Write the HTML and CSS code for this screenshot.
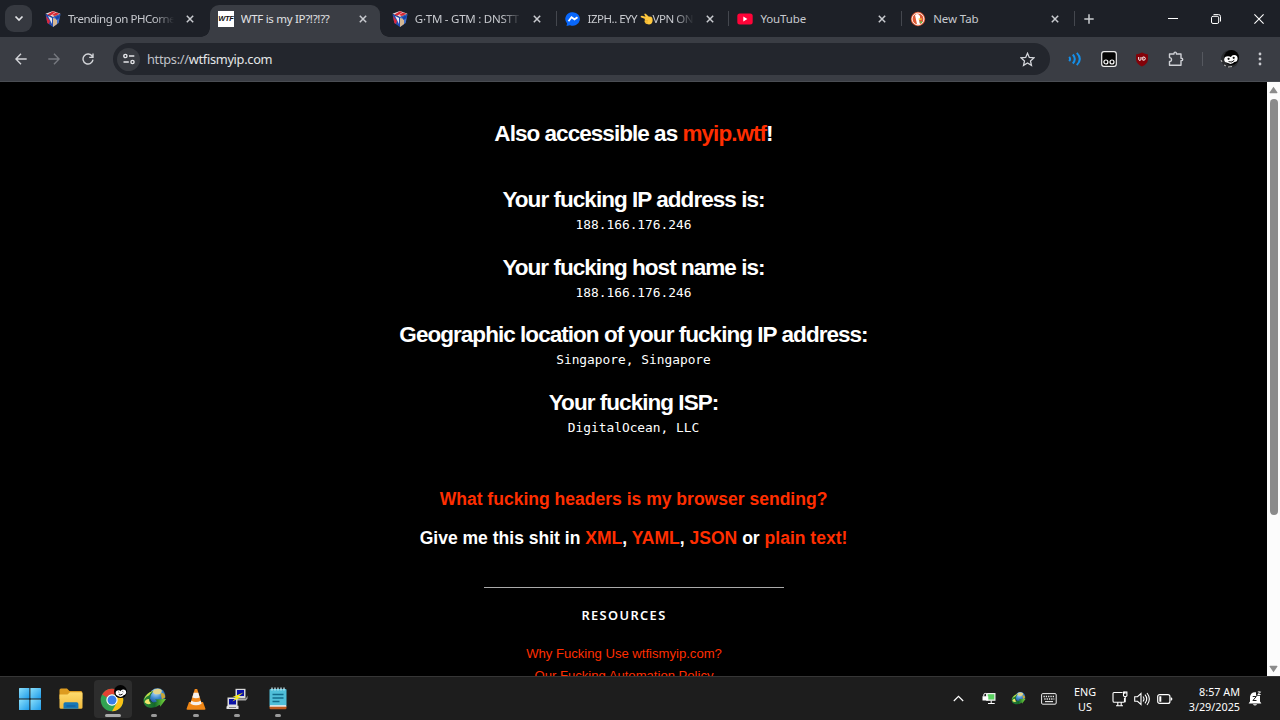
FILE: index.html
```html
<!DOCTYPE html>
<html lang="en">
<head>
<meta charset="utf-8">
<title>WTF is my IP?!?!??</title>
<link rel="stylesheet" href="styles.css">
</head>
<body>
<svg class="defs" width="0" height="0">
  <defs>
    <linearGradient id="win" x1="0" y1="0" x2="1" y2="1"><stop offset="0" stop-color="#8be0fb"/><stop offset="1" stop-color="#1d9bea"/></linearGradient>
    <linearGradient id="fold" x1="0" y1="0" x2="0" y2="1"><stop offset="0" stop-color="#ffdc6e"/><stop offset="1" stop-color="#f2b93a"/></linearGradient>
    <radialGradient id="globe" cx=".4" cy=".25" r=".8"><stop offset="0" stop-color="#c4e6ff"/><stop offset=".5" stop-color="#3f8bd0"/><stop offset="1" stop-color="#123f80"/></radialGradient>
    <linearGradient id="arrow" x1="0" y1="0" x2="1" y2="0"><stop offset="0" stop-color="#2a8a3a"/><stop offset=".5" stop-color="#14692b"/><stop offset="1" stop-color="#7fe03c"/></linearGradient>
    <symbol id="x" viewBox="0 0 8 8"><path d="M.8.8l6.4 6.4M7.2.8L.8 7.2" stroke="#c9cbd0" stroke-width="1.5"/></symbol>
    <symbol id="cube" viewBox="0 0 16 16"><path d="M8 0l7.5 2.7L8 6 .5 2.7z" fill="#e9dfe2"/><path d="M8 .2l2.5.9L5 5 2.5 3.6zM11 1.5l3.5 1.2L10 5 7 4z" fill="#d92a35"/><path d="M.5 3L8 6.2V16L2.3 12z" fill="#234bb0"/><path d="M15.5 3L8 6.2V16l5.7-4z" fill="#4272cf"/><path d="M1 5l4 5-1 3L2.3 12z" fill="#d9273a"/><path d="M3 5l4 2v6L5 9z" fill="#e8e9f3"/><path d="M8 7l4 1v5l-4 3z" fill="#d5b792"/><path d="M10 6l5-2-.5 3-3 2z" fill="#1744ab"/></symbol>
    <symbol id="idm" viewBox="0 0 22 20"><circle cx="13.800" cy="7.700" r="7.600" fill="url(#globe)"/><path d="M9 3Q14-1 18 2q0 4-4 4T9 3z" fill="#e3d58a"/><path d="M17 5q4-1 4.300 4l-3.300 2z" fill="#c6a739"/><path d="M10 2.500Q2 5 .6 10.500-.3 17.500 6.500 18.800 12 19.500 16 16l.5 2L22 10.500 11.500 11l2 1.600Q9 15 7.200 12.500 5.500 8 10 2.500z" fill="url(#arrow)"/><path d="M10 2.500Q2 5 1 11.500q1.500-3.500 5-4.500 1-2.500 4-4.500z" fill="#c3dd4b"/><path d="M1.500 13.500q3 3 6 1.300Q5.500 13 5.600 10.500 2.500 10.500 1.500 13.500z" fill="#efe56b"/></symbol>
  </defs>
</svg>
<div class="screen">
  <header class="tabstrip">
    <button class="tabsearch"><svg width="10" height="7" viewBox="0 0 10 7"><path d="M1.5 1.5L5 5l3.5-3.5" fill="none" stroke="#e2e3e6" stroke-width="1.7"/></svg></button>
    <div class="tabs">
      <div class="tab"><svg class="fav" viewBox="0 0 16 16"><use href="#cube"/></svg><span class="label fade trending">Trending on PHCorne</span><svg class="close"><use href="#x"/></svg></div>
      <div class="tab active"><span class="fav wtf">WTF</span><span class="label current-title">WTF is my IP?!?!??</span><svg class="close"><use href="#x"/></svg></div>
      <div class="tab sep"><svg class="fav" viewBox="0 0 16 16"><use href="#cube"/></svg><span class="label fade gtm">G·TM - GTM : DNSTT</span><svg class="close"><use href="#x"/></svg></div>
      <div class="tab sep"><svg class="fav" viewBox="0 0 16 16"><path d="M8 1.200a7 6.800 0 1 1-3 13L1.500 15l.6-2.500A6.800 6.800 0 0 1 8 1.200z" fill="#0867fb"/><path d="M3.500 10.200l3-3.900 3 2 3-2.100" fill="none" stroke="#fff" stroke-width="1.800"/></svg><span class="label fade izph">IZPH.. EYY <svg class="hand" viewBox="0 0 13 12"><path d="M.8 4.200Q.2 2.800 2 2.800l3.600.9L4.300 1.500Q4.600-.1 6 .9l2.600 2.500 2.700.4Q13 5 12.500 8.500q-.7 3-3.500 3l-3-.7-1-1.300q-1-1 0-1.700-1-.8.200-1.700z" fill="#ffc83d"/><path d="M5 7.700l3 .2M5.300 9.800l2.300.2" stroke="#d99720" stroke-width=".6"/></svg>VPN ON</span><svg class="close"><use href="#x"/></svg></div>
      <div class="tab sep"><svg class="fav" viewBox="0 0 16 16"><rect x=".3" y="2.500" width="15.400" height="11" rx="2.500" fill="#ff0338"/><path d="M6.300 5.600v4.800l4.100-2.400z" fill="#fff"/></svg><span class="label">YouTube</span><svg class="close"><use href="#x"/></svg></div>
      <div class="tab sep"><svg class="fav" viewBox="0 0 16 16"><circle cx="8" cy="8" r="7.200" fill="#de5833"/><circle cx="8" cy="8" r="5.900" fill="none" stroke="#fff" stroke-width=".9"/><path d="M5 4q3-2.500 5 1v3.500L9 9l1 4.300q-2 .6-3 0z" fill="#fff"/><path d="M8.700 7.300l3.300.3-.7 1.300-2.700-.2z" fill="#fdc83b"/><path d="M9 11l3-1v2.500z" fill="#65bc46"/></svg><span class="label">New Tab</span><svg class="close"><use href="#x"/></svg></div>
    </div>
    <svg class="plus" width="10" height="10" viewBox="0 0 10 10"><path d="M5 .3v9.400M.3 5h9.400" stroke="#c9cbd0" stroke-width="1.500"/></svg>
    <div class="wincontrols">
      <svg width="10" height="10" viewBox="0 0 10 10"><path d="M0 4.500h10" stroke="#fff"/></svg>
      <svg width="10" height="10" viewBox="0 0 10 10" fill="none" stroke="#fff"><rect x=".5" y="2.300" width="7.200" height="7.200" rx="1.500"/><path d="M2.500.6H7.500Q9.500.6 9.500 2.500v5"/></svg>
      <svg width="10" height="10" viewBox="0 0 10 10"><path d="M.4.4l9.200 9.200M9.600.4L.4 9.600" stroke="#fff" stroke-width="1.100"/></svg>
    </div>
  </header>

  <nav class="toolbar">
    <svg class="nav back" viewBox="0 0 12 12"><path d="M6 .8L.9 6 6 11.200M1 6h10.700"/></svg>
    <svg class="nav fwd" viewBox="0 0 12 12"><path d="M6 .8L11.100 6 6 11.200M11 6H.3"/></svg>
    <svg class="nav reload" viewBox="0 0 12 12"><path d="M10.300 3.400A5 5 0 1 0 11 6.700M11 .5v3.900H7.200"/></svg>
    <div class="omnibox">
      <span class="site"><svg width="12" height="12" viewBox="0 0 12 12" fill="none" stroke="#e5e6e9" stroke-width="1.400"><circle cx="2.400" cy="3" r="1.600"/><path d="M6 3h5.300M.5 9h5.300"/><circle cx="9.500" cy="9" r="1.600"/></svg></span>
      <span class="url"><i>https://</i>wtfismyip.com</span>
      <svg class="star" width="15" height="15" viewBox="0 0 14 14"><path d="M7 1.200l1.700 3.900 4.300.4-3.200 2.800.9 4.200L7 10.300l-3.700 2.200.9-4.200L1 5.500l4.300-.4z" fill="none" stroke="#d5d7dc" stroke-width="1.200"/></svg>
    </div>
    <div class="extensions">
      <svg width="14" height="14" viewBox="0 0 14 14" fill="none" stroke="#1590ea" stroke-width="2"><path d="M1.200 4.900q1.700 2.200 0 4.300M4.800 2.500q4 4.500 0 9M8.800.9q6 6.100 0 12.200"/></svg>
      <svg width="16" height="16" viewBox="0 0 16 16"><rect x=".7" y=".7" width="14.600" height="14.600" rx="2.300" fill="#050505" stroke="#eee" stroke-width="1.200"/><g fill="none" stroke="#fff" stroke-width="1.200"><circle cx="4.900" cy="11" r="2"/><circle cx="11" cy="11" r="2"/></g></svg>
      <svg width="14" height="15" viewBox="0 0 14 15"><path d="M7 .5q3 1.800 6 1.900v5Q12.500 12 7 14.500 1.500 12 1 7.400v-5Q4 2.300 7 .5z" fill="#830209"/><path d="M3.700 5v2.200q0 1.200 1.100 1.200T6 7.200V5M7.800 5v3.200h.8q1.700 0 1.700-1.600T8.600 5z" fill="none" stroke="#fff"/></svg>
      <svg width="16" height="16" viewBox="0 0 16 16"><path d="M1.500 3H6v-.6Q6 1.100 7.200 1.100T8.400 2.400V3H13v4.200h.4q1.300 0 1.300 1.200t-1.300 1.200H13v4.700H1.500v-3.900q2 0 2-1.900t-2-1.900z" fill="none" stroke="#cfd1d6" stroke-width="1.400" stroke-linejoin="round"/></svg>
      <span class="divider"></span>
      <svg width="20" height="20" viewBox="0 0 20 20"><circle cx="10" cy="10" r="9" fill="#292b2e"/><circle cx="11.500" cy="8.500" r="7.500" fill="#020202"/><ellipse cx="8" cy="10.500" rx="3.800" ry="3.300" fill="#fff"/><ellipse cx="14.200" cy="9.600" rx="3.400" ry="3.500" fill="#fff"/><path d="M6 12q4 5.500 9 .5z" fill="#fff"/><circle cx="8.600" cy="9.800" r="1.100" fill="#111"/><circle cx="13.700" cy="8.800" r="1.100" fill="#111"/><path d="M8.500 12.600q3.500 1.500 5.800-1.400" fill="none" stroke="#111"/><path d="M4 16l2 1M8 18l4-.4M1 11l1 2" stroke="#bbb"/></svg>
      <svg width="4" height="14" viewBox="0 0 4 14" fill="#c9cbd0"><circle cx="2" cy="2" r="1.400"/><circle cx="2" cy="7" r="1.400"/><circle cx="2" cy="12" r="1.400"/></svg>
    </div>
  </nav>

  <div class="viewport">
    <main class="page">
      <h2 class="also">Also accessible as <a>myip.wtf</a>!</h2>
      <section class="info"><h2>Your fucking IP address is:</h2><p>188.166.176.246</p></section>
      <section class="info"><h2>Your fucking host name is:</h2><p>188.166.176.246</p></section>
      <section class="info"><h2>Geographic location of your fucking IP address:</h2><p>Singapore, Singapore</p></section>
      <section class="info"><h2>Your fucking ISP:</h2><p>DigitalOcean, LLC</p></section>
      <h3 class="headers"><a>What fucking headers is my browser sending?</a></h3>
      <h3 class="formats">Give me this shit in <a>XML</a>, <a>YAML</a>, <a>JSON</a> or <a>plain text!</a></h3>
      <hr>
      <div class="resources">
        <h4>RESOURCES</h4>
        <a>Why Fucking Use wtfismyip.com?</a>
        <a>Our Fucking Automation Policy</a>
      </div>
    </main>
    <aside class="scrollbar">
      <svg width="9" height="8" viewBox="0 0 9 8"><path d="M4.500.8L8.500 6.500q0 .7-.7.700H1.200q-.7 0-.7-.7z" fill="#8b8b8b"/></svg>
      <div class="thumb"></div>
      <svg width="9" height="8" viewBox="0 0 9 8"><path d="M4.500 7.200L8.500 1.500q0-.7-.7-.7H1.200q-.7 0-.7.700z" fill="#8b8b8b"/></svg>
    </aside>
  </div>

  <footer class="taskbar">
    <div class="apps">
      <div class="app"><svg width="22" height="22" viewBox="0 0 22 22" fill="url(#win)"><rect width="10.400" height="10.400" rx=".6"/><rect x="11.400" width="10.600" height="10.400" rx=".6"/><rect y="11.400" width="10.400" height="10.600" rx=".6"/><rect x="11.400" y="11.400" width="10.600" height="10.600" rx=".6"/></svg></div>
      <div class="app"><svg width="24" height="22" viewBox="0 0 24 22"><path d="M.5 2q0-1.500 1.500-1.500h6L10.500 3H22q1.300 0 1.300 1.500V11H.5z" fill="#dd9b20"/><path d="M.5 6.500h8l2.500-2.300h11q1.500 0 1.500 1.300v14q0 1.300-1.500 1.300H2q-1.500 0-1.500-1.300z" fill="url(#fold)"/><path d="M4.500 20.800V16q0-1.700 1.700-1.700h11.500q1.700 0 1.700 1.700v4.800z" fill="#1777b5"/><path d="M7.500 18h9" stroke="#1461a0" stroke-width="1.500"/></svg></div>
      <div class="app current"><svg width="28" height="28" viewBox="0 0 28 28"><circle cx="13" cy="15" r="11.300" fill="#31a352"/><path d="M3.200 9.400A11.300 11.300 0 0 1 22.800 9.400H13a5.600 5.600 0 0 0-5 3z" fill="#e34133"/><path d="M22.800 9.400A11.300 11.300 0 0 1 13 26.300l4.800-8.500q1.500-4.500-1.800-8.400z" fill="#fbc116"/><circle cx="13" cy="15" r="5.700" fill="#fff"/><circle cx="13" cy="15" r="4.500" fill="#397ee8"/><circle cx="21.500" cy="6.600" r="6.500" fill="#020202"/><circle cx="19.500" cy="8" r="2.800" fill="#fff"/><circle cx="24.300" cy="7.300" r="2.800" fill="#fff"/><path d="M18 10q4 4 7.500-.5z" fill="#fff"/><path d="M19.500 7l.8.700M23.500 6.400l.8.500M19.800 9.600q2 1 3.800-.6" stroke="#111" fill="none"/></svg><b></b></div>
      <div class="app"><svg width="23" height="21"><use href="#idm"/></svg><b></b></div>
      <div class="app"><svg width="20" height="22" viewBox="0 0 20 22"><path d="M3 14h14l2.500 7q0 .8-1 .8h-17q-1 0-1-.8z" fill="#ef8615"/><path d="M8.800 1h2.400L16 16.500q-6 3.500-12 0z" fill="#f28a1d"/><path d="M7.700 4.800L12.300 4.800 13.700 9.400q-3.700 1.600-7.400 0zM5.300 12.700q4.700 2.500 9.400 0l.9 3q-5.600 3-11.200 0z" fill="#f5f1ed"/></svg><b></b></div>
      <div class="app"><svg width="22" height="22" viewBox="0 0 22 22"><path d="M9.500.8h10v9.500h-10z" fill="#d9d9d9"/><path d="M11 2h7v6h-7z" fill="#0b12a7"/><path d="M8.500 10.500H20l1.500-3v3l-1.700 2H8.500z" fill="#aaa"/><path d="M1.500 9.500h10V18h-10z" fill="#ddd"/><path d="M3 11h7v5.500H3z" fill="#0b12a7"/><path d="M1 17.800h11.500V21H.5v-2z" fill="#e2e2e2"/><path d="M3 19.500h7" stroke="#888"/><path d="M17.500 4.500L6.500 9l4 .2-4.200 4.300 8.500-4.200-3-.2z" fill="#f8ed13"/></svg><b></b></div>
      <div class="app"><svg width="18" height="23" viewBox="0 0 18 23"><path d="M.5 3Q.5 2 1.500 2h15q1 0 1 1v17H.5z" fill="#50bfd9"/><path d="M.5 19h17v2q0 1.300-1.300 1.300H1.800Q.5 22.300.5 21z" fill="#bd5b21"/><path d="M1 18.200h16v1.500H1z" fill="#eee"/><path d="M3 .5v3M6 .5v3M9 .5v3M12 .5v3M15 .5v3" stroke="#c0e7f0" stroke-width="1.300"/><path d="M3.500 7.500h11M3.500 11h11M3.500 14.500h7" stroke="#126c8c" stroke-width="1.400"/></svg><b></b></div>
    </div>
    <div class="tray">
      <svg class="chev" width="11" height="7" viewBox="0 0 11 7"><path d="M.8 6l4.700-4.700L10.200 6" fill="none" stroke="#fff" stroke-width="1.200"/></svg>
      <svg class="vpn" width="14" height="13" viewBox="0 0 14 13"><path d="M4.200 1h9.300v7.800H4.200z" fill="#eee"/><path d="M5.700 2.200h6.600v5.300H5.700z" fill="#59d160"/><path d="M8.700 8.500h1v2.500h3V12H6v-1h2.700zM.5 4.200h5.800v4.400H.5z" fill="#fff"/><path d="M1.800 4.500V2.900q0-1.500 1.500-1.500t1.500 1.500v1.600" fill="none" stroke="#fff"/></svg>
      <svg class="idm2" width="15" height="13"><use href="#idm"/></svg>
      <svg class="kb" width="16" height="12" viewBox="0 0 16 12"><rect x=".6" y=".6" width="14.600" height="10.600" rx="1.200" fill="none" stroke="#eee"/><path d="M2.500 3.500h11M3.300 6h10" stroke="#eee" stroke-width="1.300" stroke-dasharray="1.300 1"/><path d="M4 8.600h8" stroke="#eee" stroke-width="1.100"/></svg>
      <div class="lang">ENG<br>US</div>
      <svg class="net" width="16" height="16" viewBox="0 0 16 16" fill="none" stroke="#fff" stroke-width="1.100"><path d="M10.500 1.500H2q-1 0-1 1V10q0 1.300 1.200 1.300h9.300q1 0 1-1V7M4 14.700h7M5.800 11.500v3M9.200 11.500v3M11.500 1h3.400v3.800q-1.700 1.500-3.400 0zM13.200 5.500v5.800"/><path d="M12.500.8v2M14 .8v2"/></svg>
      <svg class="vol" width="16" height="14" viewBox="0 0 16 14" fill="none" stroke="#fff" stroke-width="1.100"><path d="M.7 4.700h2.800L7 1.500v11L3.500 9.300H.7zM9 4.500q2 2.500 0 5M11 2.700q3.500 4.300 0 8.600M13 1q4.700 6 0 12"/></svg>
      <svg class="bat" width="16" height="12" viewBox="0 0 16 12"><rect x=".7" y="1.600" width="12.200" height="8.800" rx="2" fill="none" stroke="#fff" stroke-width="1.200"/><path d="M2.300 3.300h2v5.400h-2zM13.700 4.200q1.700.2 1.700 1.800t-1.700 1.800z" fill="#fff"/></svg>
      <div class="clock">8:57 AM<br>3/29/2025</div>
      <svg class="bell" width="14" height="16" viewBox="0 0 14 16"><path d="M2 10.500V6Q2.500 1.300 7 1.300h1v3.400h4v5.800l1.400 2H.6zM4.800 13.200h4.400q-2.200 2.600-4.400 0z" fill="#fff"/><path d="M4.700 5.500h3.600L4.900 9.500h3.600" fill="none" stroke="#1d1d1d"/><path d="M9.800.9h2.700L9.900 3.500h2.700" fill="none" stroke="#fff"/></svg>
    </div>
  </footer>
</div>
</body>
</html>
```
FILE: styles.css
```css
* { box-sizing: border-box; margin: 0; padding: 0; }
body { background: #000; overflow: hidden; font-family: "Noto Sans", sans-serif; }
svg { display: block; flex: none; }
.defs { position: absolute; }
button { border: 0; }
.screen { width: 1280px; height: 720px; display: flex; flex-direction: column; }

.tabstrip { height: 37px; background: #1d2027; display: flex; align-items: center; padding-left: 5px; flex: none; }
.tabsearch { width: 27px; height: 27px; border-radius: 9px; background: #363940; display: flex; align-items: center; justify-content: center; }
.tabs { display: flex; height: 37px; margin-left: 5px; }
.tab { width: 172.800px; height: 32px; margin-top: 5px; display: flex; align-items: center; padding: 0 0 4px 8px; position: relative; color: #c7c9ce; }
.fav { width: 16px; height: 16px; flex: none; }
.wtf { background: #fff; color: #111; font: italic bold 7.500px/16px "Liberation Sans", sans-serif; letter-spacing: -.3px; text-align: center; }
.label { margin-left: 7px; width: 106px; flex: none; font-size: 11.500px; letter-spacing: -.1px; line-height: 18px; white-space: nowrap; overflow: hidden; }
.current-title { letter-spacing: -.300px; }
.fade { -webkit-mask-image: linear-gradient(90deg, #000 82%, transparent); mask-image: linear-gradient(90deg, #000 82%, transparent); }
.trending { letter-spacing: -.480px; }
.gtm { letter-spacing: -.250px; }
.izph { letter-spacing: -.500px; }
.hand { display: inline-block; width: 13px; height: 12px; vertical-align: -2px; }
.close { width: 8px; height: 8px; margin-left: 12px; }
.active { background: #3a3d44; border-radius: 9px 9px 0 0; width: 170px; margin-right: 4px; color: #e1e2e5; }
.active::before, .active::after { content: ""; position: absolute; bottom: 0; width: 9px; height: 9px; }
.active::before { left: -9px; background: radial-gradient(circle at 0 0, transparent 8.500px, #3a3d44 9px); }
.active::after { right: -9px; background: radial-gradient(circle at 100% 0, transparent 8.500px, #3a3d44 9px); }
.sep::after { content: ""; position: absolute; right: 0; top: 6px; width: 1px; height: 15px; background: #44474e; }
.plus { margin-left: 9px; }
.wincontrols { display: flex; gap: 33px; margin-left: auto; padding-right: 16px; }

.toolbar { height: 45px; background: #3a3d44; border-bottom: 1px solid #4a4d53; display: flex; align-items: center; padding: 0 18px 0 15px; flex: none; }
.nav { width: 12px; height: 12px; fill: none; stroke: #d3d5d9; stroke-width: 1.400; }
.fwd { margin-left: 21px; stroke: #777a80; }
.reload { margin-left: 22px; }
.omnibox { width: 937px; height: 32px; margin-left: 19px; border-radius: 16px; background: #23262d; display: flex; align-items: center; padding: 0 15px 0 4px; }
.site { width: 23px; height: 23px; border-radius: 50%; background: #383b41; display: flex; align-items: center; justify-content: center; }
.url { margin-left: 7px; color: #e5e6e9; font-size: 12.800px; letter-spacing: -.300px; }
.url i { font-style: normal; color: #c0c2c8; }
.star { margin-left: auto; }
.extensions { flex: 1; display: flex; align-items: center; justify-content: space-between; margin-left: 18px; }
.divider { width: 1px; height: 14px; margin: 0 -2px 0 0; background: #55585f; }

.viewport { height: 594px; display: flex; flex: none; overflow: hidden; }
.page { flex: 1; color: #fff; font-family: "Liberation Sans", Arial, sans-serif; text-align: center; padding-top: 38px; }
.page a { color: #ff2e00; }
h2 { font-size: 22.500px; line-height: 28px; letter-spacing: -.960px; }
.also { margin-bottom: 38px; }
.info { height: 50px; margin-bottom: 17.600px; }
.info p { font: 12.850px/22px "DejaVu Sans Mono", monospace; }
h3 { font-size: 17.550px; line-height: 24px; }
.headers { margin-top: 48.600px; }
.formats { margin-top: 15px; }
hr { width: 300px; height: 1px; border: 0; background: #aaa; margin: 37px auto 0; }
.resources { display: flex; flex-direction: column; align-items: center; padding-right: 19px; font-size: 13.100px; line-height: 21.500px; }
h4 { font: 600 12.800px/20px "Noto Sans", sans-serif; letter-spacing: 1.400px; margin: 17px 0 18px; }
.scrollbar { width: 13px; background: #fcfcfc; display: flex; flex-direction: column; align-items: center; padding: 4px 0 3px; }
.thumb { width: 8px; height: 416px; border-radius: 4px; background: #8b8b8b; margin: 5px 0 auto; }

.taskbar { height: 44px; background: #1d1d1d; border-top: 1px solid #363636; display: flex; align-items: center; justify-content: space-between; flex: none; }
.apps { display: flex; gap: 3.400px; padding-left: 11px; }
.app { width: 38px; height: 38px; border-radius: 4px; display: flex; align-items: center; justify-content: center; position: relative; }
.current { background: #2d2d2d; }
.app b { position: absolute; bottom: 1px; left: 16px; width: 6px; height: 3px; border-radius: 2px; background: #9a9a9a; }
.current b { left: 11px; width: 16px; background: #aaa; }
.tray { display: flex; align-items: center; padding-right: 18px; color: #fff; font-size: 10.800px; line-height: 15px; }
.vpn { margin-left: 18px; }
.idm2 { margin-left: 15px; }
.kb { margin-left: 15px; }
.lang { margin-left: 16px; width: 24px; text-align: center; }
.net { margin-left: 15px; }
.vol { margin-left: 6px; }
.bat { margin-left: 7px; }
.clock { margin-left: 14px; width: 53px; text-align: right; }
.bell { margin-left: 8px; }
```
